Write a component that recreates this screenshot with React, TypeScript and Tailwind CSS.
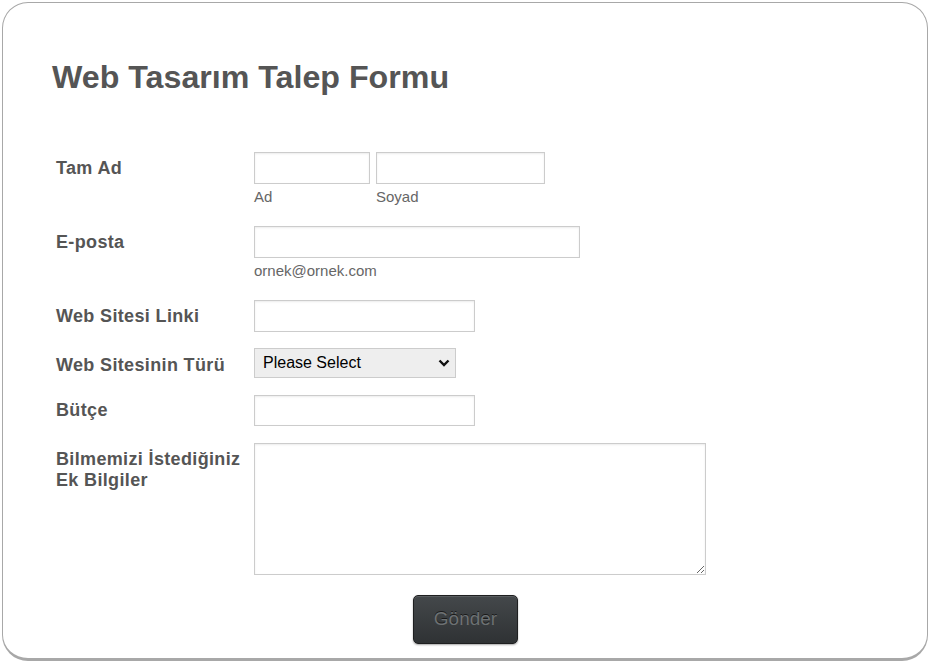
const field =
  "h-8 border border-[#cccccc] bg-white shadow-[inset_0_1px_2px_rgba(0,0,0,0.08)]";

function Row({
  label,
  className,
  labelClass,
  children,
}: {
  label: React.ReactNode;
  className?: string;
  labelClass?: string;
  children: React.ReactNode;
}) {
  return (
    <div className={"flex " + (className ?? "")}>
      <div
        className={
          "w-[202px] shrink-0 pl-[4px] text-[18px] font-bold leading-[21px] tracking-[0.35px] text-[#555555] " +
          (labelClass ?? "")
        }
      >
        {label}
      </div>
      <div>{children}</div>
    </div>
  );
}

export default function App() {
  return (
    <div className="h-[663px] w-[930px] bg-white p-[2px] font-['Liberation_Sans',Arial,sans-serif]">
      <div className="h-[659px] rounded-[26px] border border-b-[3px] border-[#a8a8a8] pl-[49px] pt-[54px]">
        <h1 className="text-[32.2px] font-bold leading-[40px] text-[#555555]">
          Web Tasarım Talep Formu
        </h1>

        <div className="mt-[55px]">
          {/* Tam Ad */}
          <Row label="Tam Ad" labelClass="pt-[6px]">
            <div className="flex gap-[6px]">
              <div className="flex flex-col">
                <input className={field + " w-[116px]"} />
                <span className="mt-[4px] text-[15px] leading-[17px] text-[#666666]">Ad</span>
              </div>
              <div className="flex flex-col">
                <input className={field + " w-[169px]"} />
                <span className="mt-[4px] text-[15px] leading-[17px] text-[#666666]">Soyad</span>
              </div>
            </div>
          </Row>

          {/* E-posta */}
          <Row label="E-posta" className="mt-[21px]" labelClass="pt-[6px]">
            <div className="flex flex-col">
              <input className={field + " w-[326px]"} />
              <span className="mt-[4px] text-[15px] leading-[17px] text-[#666666]">
                ornek@ornek.com
              </span>
            </div>
          </Row>

          <Row label="Web Sitesi Linki" className="mt-[21px]" labelClass="pt-[6px]">
            <input className={field + " w-[221px]"} />
          </Row>

          <Row label="Web Sitesinin Türü" className="mt-[16px]" labelClass="pt-[7px]">
            <div className="flex h-[30px] w-[202px] items-center justify-between border border-[#cccccc] bg-[#eeeeee] pl-[8px] pr-[5px] text-[16px] text-black">
              <span>Please Select</span>
              <svg width="12" height="8" viewBox="0 0 12 8">
                <path d="M1.5 1.5 L6 6 L10.5 1.5" fill="none" stroke="#111" strokeWidth="2.4" />
              </svg>
            </div>
          </Row>

          <Row label="Bütçe" className="mt-[17px]" labelClass="pt-[5px]">
            <input className={field + " w-[221px] h-[31px]"} />
          </Row>

          <Row
            label={
              <>
                Bilmemizi İstediğiniz
                <br />
                Ek Bilgiler
              </>
            }
            className="mt-[17px]"
            labelClass="pt-[6px]"
          >
            <textarea className="block h-[132px] w-[452px] resize border border-[#cccccc] bg-white shadow-[inset_0_1px_2px_rgba(0,0,0,0.08)]" />
          </Row>

          <div className="mt-[20px] pl-[361px]">
            <button className="h-[49px] w-[105px] rounded-[5px] border border-[#1e1f20] bg-gradient-to-b from-[#44484b] to-[#2f3234] text-[19px] text-[#6d7173] shadow-[0_1px_2px_rgba(0,0,0,0.35),inset_0_1px_0_rgba(255,255,255,0.12)] [text-shadow:0_-1px_0_#1a1a1a]">
              Gönder
            </button>
          </div>
        </div>
      </div>
    </div>
  );
}
